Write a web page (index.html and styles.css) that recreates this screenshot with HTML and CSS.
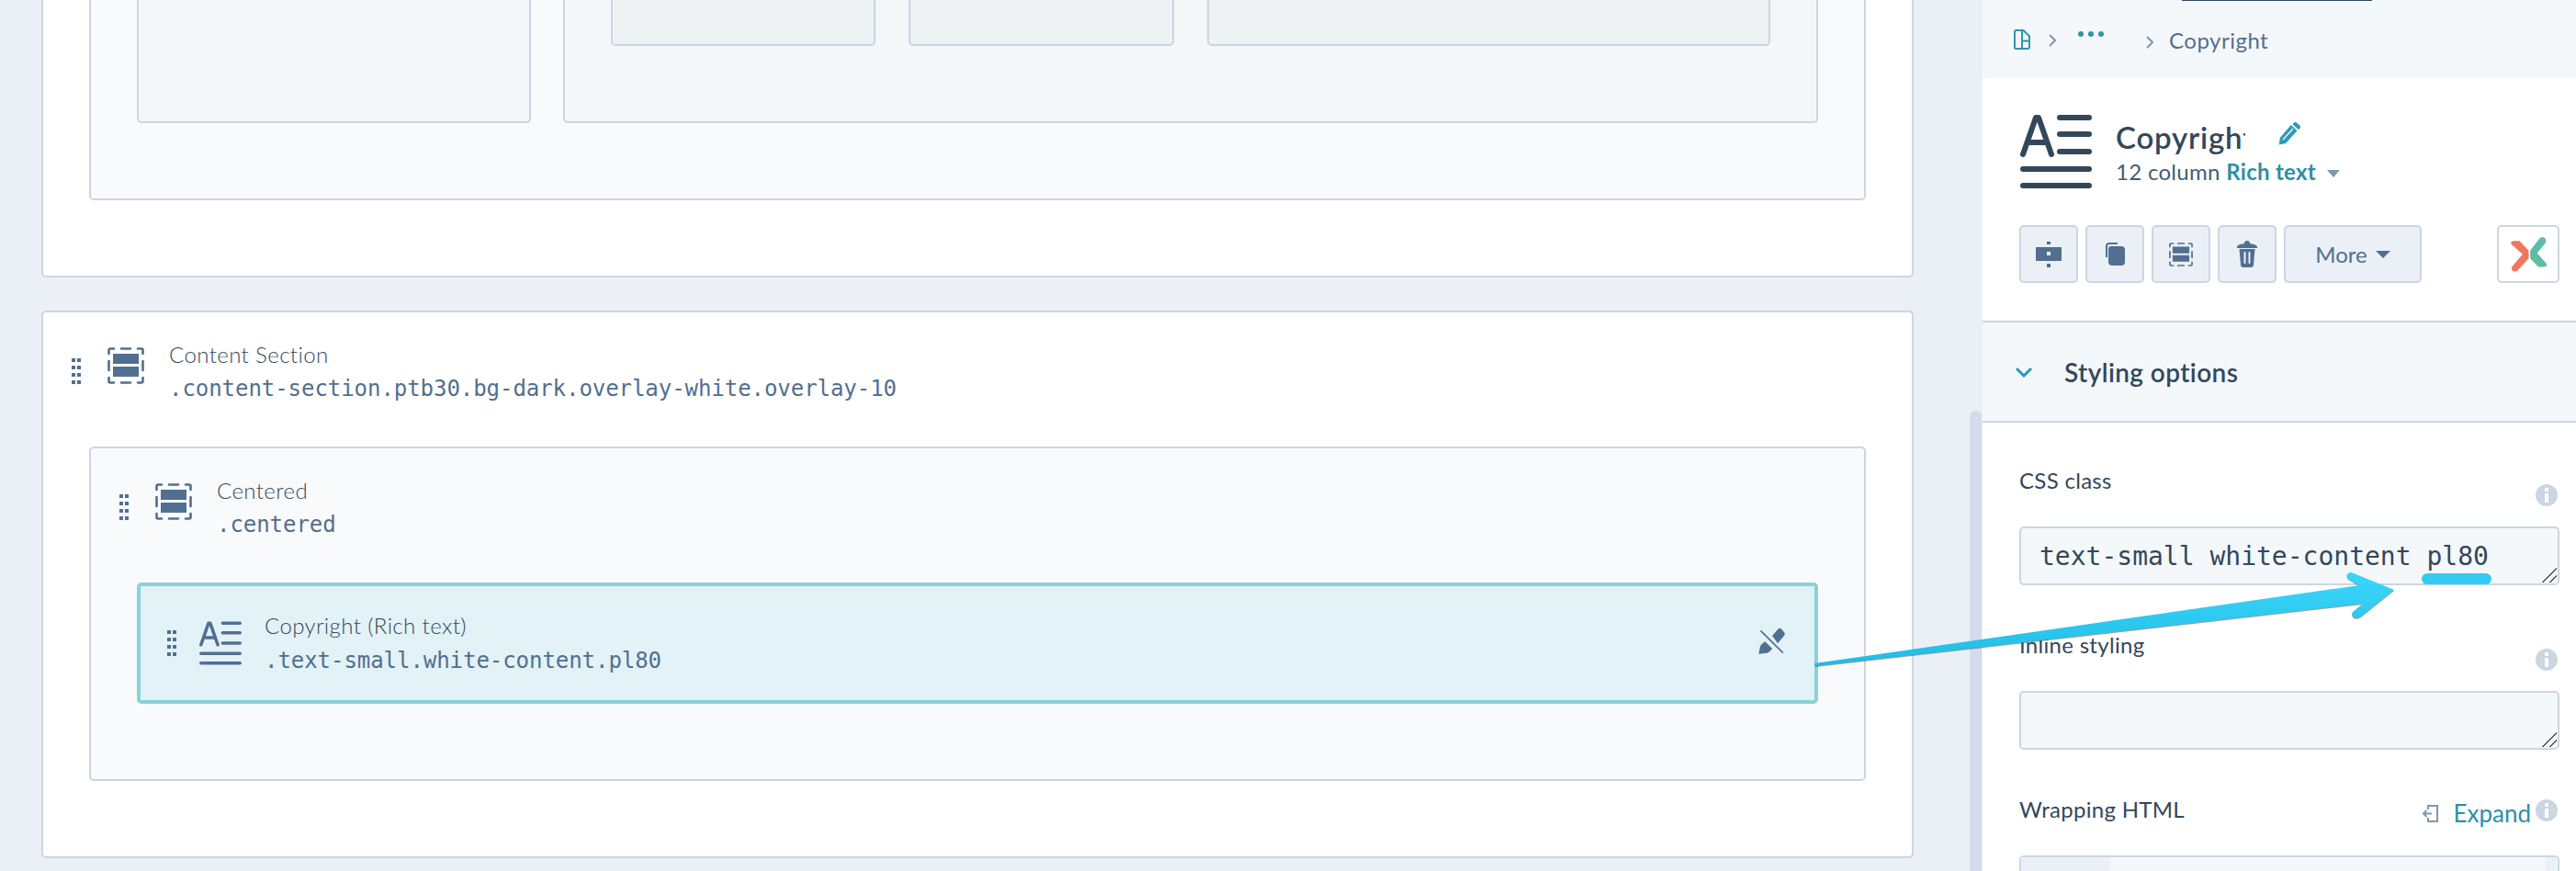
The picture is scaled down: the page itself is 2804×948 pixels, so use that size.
FILE: index.html
```html
<!DOCTYPE html>
<html lang="en">
<head>
  <meta charset="UTF-8">
  <title>Copyright - Rich text</title>
  <link rel="stylesheet" href="styles.css">
</head>
<body>

  <svg class="sprites" width="0" height="0">
    <symbol id="grip" viewBox="0 0 10 28">
      <path d="M0 0h4v4H0zM6 0h4v4H6zM0 8h4v4H0zM6 8h4v4H6zM0 16h4v4H0zM6 16h4v4H6zM0 24h4v4H0zM6 24h4v4H6z"/>
    </symbol>
    <symbol id="section" viewBox="0 0 40 40">
      <path d="M1.500 7V3a1.500 1.500 0 0 1 1.500-1.500h4M15 1.500h10M33 1.500h4A1.500 1.500 0 0 1 38.500 3v4M38.500 15v10M38.500 33v4a1.500 1.500 0 0 1-1.500 1.500h-4M25 38.500H15M7 38.500H3A1.500 1.500 0 0 1 1.500 37v-4M1.500 25V15" fill="none" stroke="currentColor" stroke-width="2.600" stroke-linecap="round"/>
      <path d="M6 7h28v11H6zM6 21h28v11H6z" fill="currentColor"/>
    </symbol>
    <symbol id="richtext" viewBox="0 0 78 80">
      <g fill="none" stroke="currentColor" stroke-width="6" stroke-linecap="round" stroke-linejoin="round">
        <path d="M3 43 17 3h3l14 40M8 30h21"/>
        <path d="M43 3h32M43 21h32M43 40h32M3 59h72M3 77h72"/>
      </g>
    </symbol>
  </svg>

  <div class="app">
    <div class="canvas">
      <div class="section section-top">
        <div class="row">
          <div class="cols">
            <div class="col col-small"></div>
            <div class="col col-large">
              <div class="cells">
                <div class="cell cell-a"></div>
                <div class="cell cell-b"></div>
                <div class="cell cell-c"></div>
              </div>
            </div>
          </div>
        </div>
      </div>

      <div class="section section-content">
        <div class="item item-section">
          <svg class="grip"><use href="#grip"/></svg>
          <svg class="item-icon"><use href="#section"/></svg>
          <div class="item-text">
            <div class="item-name">Content Section</div>
            <div class="item-class">.content-section.ptb30.bg-dark.overlay-white.overlay-10</div>
          </div>
        </div>
        <div class="row row-centered">
          <div class="item item-row">
            <svg class="grip"><use href="#grip"/></svg>
            <svg class="item-icon"><use href="#section"/></svg>
            <div class="item-text">
              <div class="item-name">Centered</div>
              <div class="item-class">.centered</div>
            </div>
          </div>
          <div class="module">
            <svg class="grip"><use href="#grip"/></svg>
            <svg class="item-icon item-icon-text"><use href="#richtext"/></svg>
            <div class="item-text">
              <div class="item-name">Copyright (Rich text)</div>
              <div class="item-class">.text-small.white-content.pl80</div>
            </div>
            <!-- unpin -->
            <svg class="unpin" viewBox="100 365 100 100">
              <path d="M152 395 172 372Q178 368 183 374L192 385Q196 391 190 396L170 420zM107 455 112 430Q118 420 128 414L152 438Q145 448 135 452z" fill="#516f90"/>
              <path d="M115 380 186 450" stroke="#516f90" stroke-width="5" stroke-linecap="round"/>
            </svg>
          </div>
        </div>
      </div>
    </div>

    <div class="scrollbar"><div class="thumb"></div></div>

    <div class="panel">
      <div class="crumbs">
        <div class="crumb-line"></div>
        <svg class="crumb-file" viewBox="0 0 18 22">
          <path d="M2.500 1h8L17 7.500V19a2 2 0 0 1-2 2H2.500a1.500 1.500 0 0 1-1.500-1.500v-17A1.500 1.500 0 0 1 2.500 1zM9 1v11.500H17M9 12.500V21" fill="none" stroke="#2e94ae" stroke-width="2"/>
        </svg>
        <svg class="crumb-arrow" viewBox="0 0 8 14"><path d="M1 1l6 6-6 6" fill="none" stroke="#7c98b6" stroke-width="2"/></svg>
        <svg class="crumb-dots" viewBox="0 0 28 6"><circle cx="3" cy="3" r="3"/><circle cx="14" cy="3" r="3"/><circle cx="25" cy="3" r="3"/></svg>
        <svg class="crumb-arrow crumb-arrow-last" viewBox="0 0 8 14"><path d="M1 1l6 6-6 6" fill="none" stroke="#7c98b6" stroke-width="2"/></svg>
        <span class="crumb-name">Copyright</span>
      </div>

      <div class="head">
        <svg class="head-icon"><use href="#richtext"/></svg>
        <div class="head-text">
          <div class="head-title">
            <span class="title-clip">Copyright</span>
            <svg class="pencil" viewBox="0 0 25 26">
              <path d="M17 1.500a2 2 0 0 1 2.800 0l3.700 3.300a2 2 0 0 1 0 2.800l-1.500 1.700-6.500-6zM13.800 4 20.500 10.200 8 24 .8 25.500 1.800 18z" fill="#2e9ab5"/>
              <path d="M5 20 16 8" stroke="#fff" stroke-width="1.200"/>
            </svg>
          </div>
          <div class="head-sub">12 column <b>Rich text</b><i class="caret"></i></div>
        </div>
      </div>

      <div class="tools">
        <div class="tool">
          <svg width="28" height="28" viewBox="0 0 28 28">
            <path d="M0 6h28v15H0zM12 0h4v3h-4zM12 24h4v4h-4z" fill="#516f90"/>
            <path d="M12 11h4v4h-4z" fill="#eaf0f6"/>
          </svg>
        </div>
        <div class="tool">
          <svg width="21" height="25" viewBox="0 0 21 25">
            <path d="M1 16V4a3 3 0 0 1 3-3h9" fill="none" stroke="#516f90" stroke-width="2"/>
            <path d="M6 4h11a4 4 0 0 1 4 4v13a4 4 0 0 1-4 4H7a4 4 0 0 1-4-4V7a3 3 0 0 1 3-3z" fill="#516f90"/>
          </svg>
        </div>
        <div class="tool">
          <svg class="tool-section"><use href="#section"/></svg>
        </div>
        <div class="tool">
          <svg width="22" height="29" viewBox="0 0 22 29">
            <path d="M0 6.500C1 4 5 3.500 7.500 3.200 8 1 9.500 0 11 0s3 1 3.500 3.200C17 3.500 21 4 22 6.500V8H0z" fill="#516f90"/>
            <path d="M2.500 9h17l-1.500 17a3 3 0 0 1-3 3H7a3 3 0 0 1-3-3z" fill="#516f90"/>
            <path d="M8.500 13v11M13.500 13v11" stroke="#eaf0f6" stroke-width="2" stroke-linecap="round"/>
          </svg>
        </div>
        <div class="tool tool-more">More<i class="caret caret-dark"></i></div>
        <div class="tool tool-logo">
          <svg width="43" height="42" viewBox="90 50 130 125">
            <path d="M97 78Q96 68 106 68L125 68 155 100 155 125 117 166Q108 172 101 165 96 158 102 150L135 112z" fill="#f0775c"/>
            <path d="M192 58Q202 52 210 60 215 67 210 75L183 108 213 142Q218 152 206 153L187 153 160 125 160 100z" fill="#5cbfa5"/>
          </svg>
        </div>
      </div>

      <div class="group">
        <svg class="group-chevron" viewBox="0 0 20 12"><path d="M2 2l8 8 8-8" fill="none" stroke="#2e9ab5" stroke-width="3"/></svg>
        <span>Styling options</span>
      </div>

      <div class="fields">
        <div class="field field-class">
          <div class="field-top">
            <label>CSS class</label>
            <i class="info"></i>
          </div>
          <div class="box">text-small white-content pl80<i class="grabber"></i></div>
        </div>
        <div class="field field-inline">
          <div class="field-top">
            <label>Inline styling</label>
            <i class="info"></i>
          </div>
          <div class="box"><i class="grabber"></i></div>
        </div>
        <div class="field field-wrap">
          <div class="field-top">
            <label>Wrapping HTML</label>
            <div class="expand">
              <svg width="17" height="19" viewBox="0 0 17 19">
                <path d="M6 5V1h10v17H6v-4M1 9.500h9M4.500 6 1 9.500 4.500 13" fill="none" stroke="#7c98b6" stroke-width="2"/>
              </svg>
              <a>Expand</a>
            </div>
            <i class="info"></i>
          </div>
          <div class="editor">
            <div class="gutter"></div>
            <div class="editor-bar"></div>
          </div>
        </div>
      </div>
    </div>

    <!-- callout drawn on top of the screenshot -->
    <div class="mark"></div>
    <svg class="arrow" viewBox="0 0 700 140">
      <defs>
        <linearGradient id="arrowFill" x1="0" y1="0" x2="0" y2="1">
          <stop offset="0" stop-color="#3cd6fb"/>
          <stop offset="1" stop-color="#1fbce4"/>
        </linearGradient>
      </defs>
      <path d="M0 127 593 42 581 35Q578 31 581 29 583 27 587 29L631 47 595 76Q591 79 587 77 584 74 586 71L597 62 1 130z" fill="url(#arrowFill)"/>
    </svg>
  </div>

</body>
</html>
```

FILE: styles.css
```css
* {
  box-sizing: border-box;
}

body {
  margin: 0;
  font-family: Lato, "Noto Sans", sans-serif;
  background-color: #eaf0f6;
  color: #33475b;
}

.sprites {
  display: block;
  height: 0;
}

.app {
  position: relative;
  display: flex;
  height: 948px;
  overflow: hidden;
}

/* left canvas */
.canvas {
  width: 2144px;
  flex-shrink: 0;
  height: 948px;
  overflow: hidden;
  padding: 0 61px 0 45px;
}

.section {
  background-color: white;
  border: 2px solid #cbd6e2;
  border-radius: 5px;
  padding: 0 50px 82px;
}

.section-top {
  height: 362px;
  margin-top: -60px;
}

.section-content {
  margin-top: 36px;
  height: 596px;
}

.row {
  background-color: #f9fafc;
  border: 2px solid #cbd6e2;
  border-radius: 5px;
  padding: 0 50px 82px;
}

.section-top .row {
  height: 276px;
}

.cols {
  display: flex;
  gap: 35px;
  height: 190px;
}

.col {
  background-color: #f4f6f9;
  border: 2px solid #cbd6e2;
  border-top: 0;
  border-radius: 0 0 5px 5px;
}

.col-small {
  width: 429px;
}

.col-large {
  flex: 1;
  padding: 0 50px;
}

.cells {
  display: flex;
  gap: 36px;
}

.cell {
  height: 106px;
  background-color: #eef2f5;
  border: 2px solid #cbd6e2;
  border-top: 0;
  border-radius: 0 0 5px 5px;
}

.cell-a {
  width: 288px;
}

.cell-b {
  width: 289px;
}

.cell-c {
  flex: 1;
}

.item {
  display: flex;
  align-items: flex-start;
  margin-left: -50px;
}

.item-section {
  height: 146px;
  padding-top: 38px;
}

.grip {
  width: 10px;
  height: 28px;
  flex-shrink: 0;
  fill: #516f90;
  margin: 12px 29px 0 31px;
}

.item-icon {
  width: 40px;
  height: 40px;
  flex-shrink: 0;
  color: #516f90;
  fill: #516f90;
  margin-right: 27px;
}

.item-text {
  margin-top: -8px;
}

.item-name {
  font-size: 24px;
  line-height: 32px;
  font-weight: 300;
  letter-spacing: 0.4px;
  color: #33475b;
}

.item-class {
  font-family: "DejaVu Sans Mono", monospace;
  font-size: 24px;
  line-height: 32px;
  letter-spacing: -0.05px;
  margin-top: 5px;
  color: #516f90;
  white-space: nowrap;
}

.row-centered {
  height: 364px;
  padding-bottom: 0;
}

.item-row {
  height: 146px;
  padding-top: 38px;
}

.module {
  display: flex;
  align-items: flex-start;
  position: relative;
  height: 132px;
  background-color: #e2f2f6;
  border: 4px solid #89d1db;
  border-radius: 5px;
  padding-top: 38px;
}

.module .grip {
  margin: 10px 25px 0 29px;
}

.module .item-class {
  margin-top: 6px;
}

.item-icon-text {
  width: 46px;
  height: 48px;
  margin-right: 25px;
  margin-top: 0;
}

.module .item-text {
  margin-top: -11px;
}

.unpin {
  width: 33px;
  height: 33px;
  margin-left: auto;
  margin-right: 30px;
  margin-top: 6px;
}

/* scrollbar between canvas and panel */
.scrollbar {
  width: 14px;
  flex-shrink: 0;
  background-color: #eaf0f6;
  padding-top: 447px;
}

.thumb {
  width: 13px;
  height: 501px;
  background-color: #d5dce9;
  border-radius: 6px 6px 0 0;
}

/* right panel */
.panel {
  width: 646px;
  flex-shrink: 0;
  background-color: white;
}

.crumbs {
  position: relative;
  display: flex;
  align-items: flex-start;
  height: 85px;
  background-color: #f5f8fa;
  padding: 32px 0 0 34px;
}

.crumb-line {
  position: absolute;
  top: 0;
  left: 217px;
  width: 207px;
  height: 1px;
  background-color: #33475b;
}

.crumb-file {
  width: 18px;
  height: 22px;
}

.crumb-arrow {
  width: 8px;
  height: 14px;
  margin: 5px 0 0 20px;
}

.crumb-dots {
  width: 28px;
  height: 6px;
  margin: 2px 0 0 24px;
  fill: #2e94ae;
}

.crumb-arrow-last {
  margin: 7px 0 0 46px;
}

.crumb-name {
  font-size: 24px;
  line-height: 30px;
  letter-spacing: 0.5px;
  color: #516f90;
  margin: -3px 0 0 17px;
}

.head {
  display: flex;
  height: 160px;
  padding: 40px 0 0 41px;
}

.head-icon {
  width: 78px;
  height: 80px;
  color: #33475b;
  flex-shrink: 0;
}

.head-text {
  margin-left: 26px;
}

.head-title {
  display: flex;
  align-items: flex-start;
  font-size: 33px;
  line-height: 44px;
  font-weight: 600;
  letter-spacing: 0.8px;
  margin-top: 2px;
}

.title-clip {
  display: block;
  width: 141px;
  overflow: hidden;
  white-space: nowrap;
}

.pencil {
  width: 25px;
  height: 26px;
  margin: 5px 0 0 36px;
}

.head-sub {
  font-size: 24px;
  line-height: 30px;
  font-weight: 400;
  letter-spacing: 0.3px;
  color: #425b76;
  margin-top: 1px;
}

.head-sub b {
  color: #2e8fa8;
  font-weight: 700;
}

.caret {
  display: inline-block;
  width: 0;
  height: 0;
  margin-left: 12px;
  vertical-align: 3px;
  border-left: 7px solid transparent;
  border-right: 7px solid transparent;
  border-top: 8px solid #7c98b6;
}

.caret-dark {
  border-left-width: 8px;
  border-right-width: 8px;
  border-top-color: #516f90;
  margin-left: 9px;
}

.tools {
  display: flex;
  gap: 8px;
  height: 104px;
  padding-left: 40px;
}

.tool {
  display: flex;
  align-items: center;
  justify-content: center;
  width: 64px;
  height: 63px;
  background-color: #eaf0f6;
  border: 2px solid #cbd6e2;
  border-radius: 5px;
}

.tool-section {
  width: 26px;
  height: 26px;
  color: #516f90;
}

.tool-more {
  width: 150px;
  font-size: 24px;
  color: #516f90;
}

.tool-logo {
  width: 68px;
  margin-left: 74px;
  background-color: white;
}

.group {
  display: flex;
  align-items: center;
  height: 111px;
  background-color: #f5f8fa;
  border-top: 2px solid #cbd6e2;
  border-bottom: 2px solid #cbd6e2;
  padding-left: 35px;
  font-size: 28px;
  font-weight: 600;
  letter-spacing: 0.4px;
}

.group-chevron {
  width: 20px;
  height: 12px;
  margin-right: 34px;
}

.fields {
  padding: 0 18px 0 40px;
}

.field-top {
  position: relative;
  display: flex;
  justify-content: space-between;
}

.field-top label {
  font-size: 24px;
  line-height: 30px;
  letter-spacing: 0.3px;
}

.field-class {
  padding-top: 48px;
}

.field-class .field-top,
.field-inline .field-top {
  height: 65px;
}

.info {
  position: absolute;
  right: 2px;
  top: 19px;
  width: 24px;
  height: 24px;
  background-color: #cbd6e2;
  border-radius: 50%;
}

.info::before,
.info::after {
  content: "";
  position: absolute;
  left: 10px;
  width: 4px;
  background-color: white;
}

.info::before {
  top: 4px;
  height: 4px;
}

.info::after {
  top: 10px;
  height: 10px;
}

.box {
  position: relative;
  height: 64px;
  background-color: #f5f8fa;
  border: 2px solid #cbd6e2;
  border-radius: 5px;
  padding: 0 20px;
  font-family: "DejaVu Sans Mono", monospace;
  font-size: 28px;
  line-height: 62px;
  white-space: nowrap;
}

.grabber {
  position: absolute;
  right: 1px;
  bottom: 1px;
  width: 16px;
  height: 16px;
  background: linear-gradient(135deg, transparent 50%, #555 50%, #555 56%, transparent 56%, transparent 74%, #555 74%, #555 80%, transparent 80%);
}

.field-inline {
  padding-top: 50px;
}

.field-wrap {
  padding-top: 50px;
}

.field-wrap .field-top {
  height: 65px;
}

.expand {
  position: absolute;
  right: 31px;
  top: 4px;
  display: flex;
  align-items: center;
  gap: 16px;
  font-size: 26px;
  line-height: 30px;
  font-weight: 400;
  color: #2e8fa8;
}

.field-wrap .info {
  top: 4px;
}

.editor {
  display: flex;
  justify-content: space-between;
  height: 60px;
  background-color: #f5f8fa;
  border: 2px solid #cbd6e2;
  border-radius: 5px 5px 0 0;
}

.gutter {
  width: 97px;
  background-color: #eaf0f6;
}

.editor-bar {
  width: 12px;
  background-color: #eaf0f6;
  margin-right: 1px;
}

/* callout */
.mark {
  position: absolute;
  left: 2636px;
  top: 624px;
  width: 76px;
  height: 12px;
  background-color: #35caf2;
  border-radius: 6px;
}

.arrow {
  position: absolute;
  left: 1975px;
  top: 595px;
  width: 700px;
  height: 140px;
  overflow: visible;
  filter: drop-shadow(0 1px 0 rgba(60, 60, 60, 0.5));
}
```
